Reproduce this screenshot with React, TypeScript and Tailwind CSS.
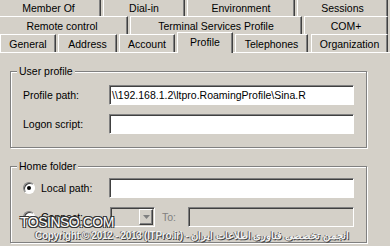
const raised = 'border-t border-l border-t-white border-l-white border-r border-r-[#404040] shadow-[inset_-1px_0_0_#808080]';

function Tab({ label, className }: { label: string; className: string }) {
  return (
    <div className={`flex shrink-0 items-center justify-center bg-[#d4d0c8] ${raised} ${className}`}>
      <span className="whitespace-nowrap">{label}</span>
    </div>
  );
}

function Input({ value, className = '' }: { value?: string; className?: string }) {
  return (
    <div
      className={`flex h-[20px] items-center overflow-hidden whitespace-nowrap border border-t-[#808080] border-l-[#808080] border-b-white border-r-white pl-[2px] shadow-[inset_1px_1px_0_#404040] ${className}`}
    >
      {value}
    </div>
  );
}

function Radio({ checked }: { checked?: boolean }) {
  return (
    <span className="relative flex h-[12px] w-[12px] shrink-0 items-center justify-center rounded-full border border-t-[#808080] border-l-[#808080] border-b-white border-r-white bg-white shadow-[inset_1px_1px_0_#404040]">
      {checked && <span className="h-[4px] w-[4px] rounded-full bg-black" />}
    </span>
  );
}

function Group({ title, children }: { title: string; children: React.ReactNode }) {
  return (
    <div className="relative ml-[10px] w-[357px] border border-[#808080] px-[12px] shadow-[inset_1px_1px_0_#fff,1px_1px_0_#fff]">
      <span className="absolute -top-[7px] left-[6px] bg-[#d4d0c8] px-[2px] leading-[12px]">{title}</span>
      {children}
    </div>
  );
}

export default function App() {
  return (
    <div
      className="relative h-[246px] w-[390px] overflow-hidden bg-[#d4d0c8] text-[10.5px] leading-[12px] text-black"
      style={{ fontFamily: '"Liberation Sans", Arial, sans-serif' }}
    >
      {/* tab rows */}
      <div className="flex h-[16px] gap-[2px]">
        <Tab label="Member Of" className="-ml-[4px] w-[105px] border-t-0" />
        <Tab label="Dial-in" className="w-[82px] border-t-0" />
        <Tab label="Environment" className="w-[108px] border-t-0" />
        <Tab label="Sessions" className="w-[91px] border-t-0" />
      </div>
      <div className="flex h-[18px] gap-[2px]">
        <Tab label="Remote control" className="-ml-[4px] w-[132px]" />
        <Tab label="Terminal Services Profile" className="w-[172px]" />
        <Tab label="COM+" className="w-[84px]" />
      </div>
      <div className="flex h-[18px] items-end">
        <Tab label="General" className="h-[18px] w-[56px]" />
        <Tab label="Address" className="ml-[2px] h-[18px] w-[59px]" />
        <Tab label="Account" className="ml-[2px] h-[18px] w-[56px]" />
        <Tab label="Profile" className="relative z-10 -mb-px ml-[2px] h-[21px] w-[56px] pb-[2px]" />
        <Tab label="Telephones" className="ml-[2px] h-[18px] w-[73px]" />
        <Tab label="Organization" className="ml-[3px] h-[18px] w-[77px]" />
      </div>

      {/* page */}
      <div className="border-t border-white pt-[18px]">
        <Group title="User profile">
          <div className="flex flex-col gap-[9px] pt-[13px] pb-[13px]">
            <div className="flex items-center">
              <span className="w-[86px] shrink-0">Profile path:</span>
              <Input className="flex-1 bg-white" value="\\192.168.1.2\ltpro.RoamingProfile\Sina.R" />
            </div>
            <div className="flex items-center">
              <span className="w-[86px] shrink-0">Logon script:</span>
              <Input className="flex-1 bg-white" />
            </div>
          </div>
        </Group>

        <div className="h-[18px]" />

        <Group title="Home folder">
          <div className="flex flex-col gap-[9px] pt-[11px] pb-[15px]">
            <div className="flex items-center">
              <div className="flex w-[86px] shrink-0 items-center gap-[6px]">
                <Radio checked />
                <span>Local path:</span>
              </div>
              <Input className="flex-1 bg-white" />
            </div>
            <div className="flex items-center">
              <div className="flex w-[86px] shrink-0 items-center gap-[6px]">
                <Radio />
                <span>Connect:</span>
              </div>
              <div className="ml-[1px] flex h-[20px] w-[45px] shrink-0 items-stretch justify-end border border-t-[#808080] border-l-[#808080] border-b-white border-r-white p-px shadow-[inset_1px_1px_0_#404040]">
                <div className="flex w-[14px] items-center justify-center border border-t-white border-l-white border-b-[#404040] border-r-[#404040] shadow-[inset_-1px_-1px_0_#808080]">
                  <svg width="7" height="4" viewBox="0 0 7 4">
                    <path d="M0 0h7L3.5 4z" fill="#808080" />
                  </svg>
                </div>
              </div>
              <span className="ml-[7px] w-[26px] shrink-0 text-[#808080]">To:</span>
              <Input className="flex-1" />
            </div>
          </div>
        </Group>
      </div>

      {/* watermark */}
      <span className="absolute left-[20px] top-[215px] text-[14px] leading-[14px] tracking-[-0.5px] text-white [text-shadow:1px_1px_0_#333,-1px_-1px_0_#333,1px_-1px_0_#333,-1px_1px_0_#333]">
        TOSINSO.COM
      </span>
      <span className="absolute left-[35px] top-[230px] flex items-baseline whitespace-nowrap font-bold leading-[12px] text-[#f2f2f2] [text-shadow:1px_1px_0_#444,-1px_0_0_#666]">
        <span className="text-[10px] tracking-[-0.3px]">Copyright © 2012 - 2013 (ITPro.ir) -&nbsp;</span>
        <span className="text-[10px]">انجمن تخصصی فناوری اطلاعات ایران</span>
      </span>
    </div>
  );
}
